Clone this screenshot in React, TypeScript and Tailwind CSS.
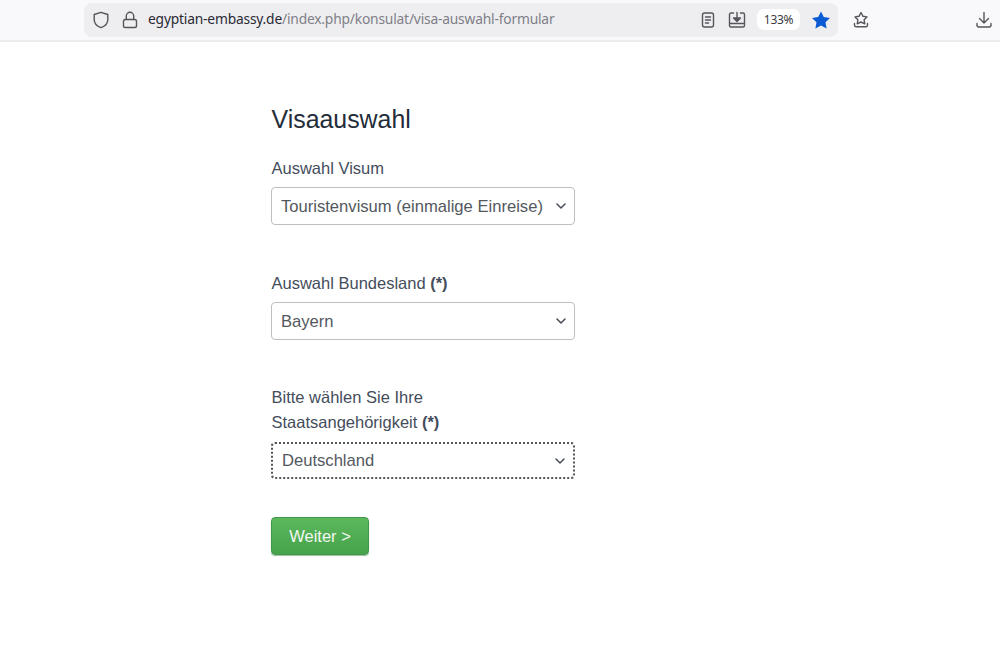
import React from "react";

const Chevron = () => (
  <svg width="10" height="6" viewBox="0 0 10 6" fill="none" stroke="#444b55" strokeWidth="1.5" strokeLinecap="round" strokeLinejoin="round">
    <path d="M1 1l4 4 4-4" />
  </svg>
);

const Ico = ({ children, w = 18 }: { children: React.ReactNode; w?: number }) => (
  <svg width={w} height={18} viewBox={`0 0 ${w} 18`} fill="none" stroke="#55555c" strokeWidth="1.4" strokeLinecap="round" strokeLinejoin="round">
    {children}
  </svg>
);

function Select({ value, focused }: { value: string; focused?: boolean }) {
  return (
    <div
      className={
        "flex w-[304px] items-center justify-between rounded-[4px] bg-white pl-[9px] pr-[8px] text-[16.6px] text-[#53585e] " +
        (focused ? "h-[37px] border-2 border-dotted border-[#555555]" : "h-[38px] border-[1.5px] border-[#bcbfc3]")
      }
    >
      <span className="pt-[2px]">{value}</span>
      <Chevron />
    </div>
  );
}

export default function App() {
  return (
    <div className="flex min-h-[649px] flex-col bg-white font-['Liberation_Sans',sans-serif]">
      <header className="flex h-[42px] items-center border-b-2 border-[#ececef] bg-[#f9f9fb] pb-[1px] pl-[84px] pr-[7px] font-['Noto_Sans',sans-serif]">
        <div className="flex h-[34px] w-[754px] items-center rounded-[8px] bg-[#eeeef1] pl-[8px] pr-[7px]">
          <Ico>
            <path d="M9 1.300l6.800 2.200v5c0 3.900-2.800 6.800-6.800 8.200-4-1.400-6.800-4.300-6.800-8.200v-5z" />
          </Ico>
          <span className="ml-[11px] flex">
            <Ico>
              <rect x="2.500" y="8.500" width="13" height="8" rx="1.800" />
              <path d="M5.300 8.500V5a3.700 3.700 0 0 1 7.400 0v3.500" />
            </Ico>
          </span>
          <span className="ml-[9px] whitespace-nowrap text-[13.800px] tracking-[-0.19px] text-[#2b2a33]">
            egyptian-embassy.de<span className="text-[#7f7f87]">/index.php/konsulat/visa-auswahl-formular</span>
          </span>
          <div className="ml-auto flex items-center">
            <Ico>
              <rect x="3.500" y="2" width="11" height="14" rx="2" />
              <path d="M6.500 6h5M6.500 9h5M6.500 12h3" />
            </Ico>
            <span className="ml-[11px] flex">
              <Ico>
                <path d="M5.500 2H3A1.500 1.500 0 0 0 1.500 3.500v11A1.500 1.500 0 0 0 3 16h12a1.500 1.500 0 0 0 1.500-1.500v-11A1.500 1.500 0 0 0 15 2h-2.500M1.500 12.500h15M9 1.500v7" />
                <path d="M5.500 7h7L9 10.500z" fill="#55555c" />
              </Ico>
            </span>
            <span className="ml-[11px] flex h-[21px] w-[43px] items-center justify-center rounded-[7px] bg-white text-[12px] tracking-[-0.3px] text-[#3b3b42]">
              133%
            </span>
            <span className="ml-[11px] flex">
              <svg width="20" height="18" viewBox="0 0 20 18" fill="#0a5bd3">
                <path d="M10 .500l2.800 5.600 6.200.9-4.500 4.300 1.100 6.200L10 14.600l-5.600 2.900 1.100-6.200L1 7l6.200-.9z" />
              </svg>
            </span>
          </div>
        </div>
        <span className="ml-[14px] flex">
          <Ico>
            <path d="M9 1.500l2 3.800 4 .6-2.900 2.900.7 4L9 11l-3.800 1.800.7-4L3 5.900l4-.6z" />
            <path d="M2.500 12.500v1.800a1.500 1.500 0 0 0 1.500 1.500h10a1.500 1.500 0 0 0 1.500-1.500v-1.800" />
          </Ico>
        </span>
        <span className="ml-auto flex">
          <Ico>
            <path d="M9 1.500v10.500M4.500 7.500L9 12l4.500-4.500M2 12.500V14a2 2 0 0 0 2 2h10a2 2 0 0 0 2-2v-1.500" />
          </Ico>
        </span>
      </header>

      <main className="ml-[271px] w-[304px] pt-[61px] text-[16.500px] text-[#444d5b]">
        <h1 className="pl-[0.5px] text-[24.900px] leading-[32px] text-[#242c39]">Visaauswahl</h1>

        <label className="mt-[21px] block pl-[0.5px] leading-[24px]">Auswahl Visum</label>
        <div className="mt-[7px]">
          <Select value="Touristenvisum (einmalige Einreise)" />
        </div>

        <label className="mt-[46px] block pl-[0.5px] leading-[24px]">
          Auswahl Bundesland <b>(*)</b>
        </label>
        <div className="mt-[7px]">
          <Select value="Bayern" />
        </div>

        <label className="mt-[45px] block pl-[0.5px] leading-[25px]">
          Bitte wählen Sie Ihre
          <br />
          Staatsangehörigkeit <b>(*)</b>
        </label>
        <div className="mt-[7px]">
          <Select value="Deutschland" focused />
        </div>

        <button className="mt-[38px] block h-[38px] w-[98px] rounded-[4px] border border-[#41964a] bg-gradient-to-b from-[#5cb85c] to-[#47a34b] text-[16.500px] text-[#f2f8f2] shadow-[0_1px_1px_rgba(60,120,60,0.5)]">
          Weiter &gt;
        </button>
      </main>
    </div>
  );
}
